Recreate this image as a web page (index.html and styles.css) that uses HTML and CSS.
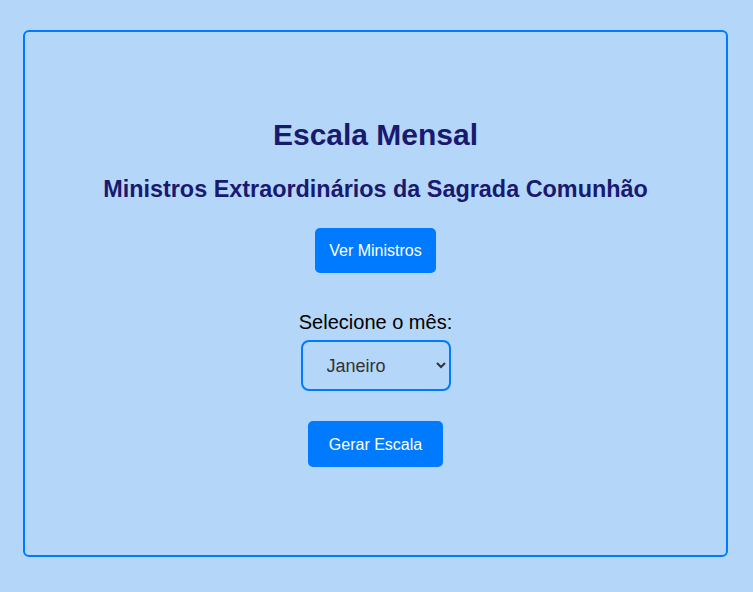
FILE: index.html
```html
<!DOCTYPE html>
<html lang="pt">
<head>
<meta charset="utf-8">
<title>Escala Mensal</title>
<link rel="stylesheet" href="styles.css">
</head>
<body>
<div class="card">
  <h1 class="title">Escala Mensal</h1>
  <h2 class="subtitle">Ministros Extraordinários da Sagrada Comunhão</h2>
  <button class="btn btn-ministros">Ver Ministros</button>
  <label class="label" for="mes">Selecione o mês:</label>
  <select class="select" id="mes">
    <option>Janeiro</option>
    <option>Fevereiro</option>
    <option>Março</option>
    <option>Abril</option>
    <option>Maio</option>
    <option>Junho</option>
    <option>Julho</option>
    <option>Agosto</option>
    <option>Setembro</option>
    <option>Outubro</option>
    <option>Novembro</option>
    <option>Dezembro</option>
  </select>
  <button class="btn btn-gerar">Gerar Escala</button>
</div>
</body>
</html>
```

FILE: styles.css
```css
html, body {
  margin: 0;
  padding: 0;
  background: #b4d6f9;
  font-family: "Liberation Sans", Arial, sans-serif;
}

body {
  padding: 30px 25px 35px 23px;
}

.card {
  border: 2px solid #007bff;
  border-radius: 6px;
  display: flex;
  flex-direction: column;
  align-items: center;
  padding-top: 85px;
  box-sizing: border-box;
  height: 527px;
}

.title {
  margin: 0;
  font-size: 30px;
  line-height: 36px;
  color: #191970;
  font-weight: bold;
}

.subtitle {
  margin: 22px 0 0;
  font-size: 23.4px;
  line-height: 28px;
  color: #191970;
  font-weight: bold;
}

.btn {
  background: #007bff;
  color: #ffffff;
  border: none;
  border-radius: 5px;
  font-family: "Liberation Sans", Arial, sans-serif;
  font-size: 16px;
  line-height: 19px;
  padding: 13px 14px;
}

.btn-ministros {
  margin-top: 25px;
}

.label {
  margin-top: 37px;
  font-size: 20px;
  line-height: 24px;
  color: #000;
}

.select {
  margin-top: 6px;
  width: 150px;
  height: 51px;
  border: 2px solid #007bff;
  border-radius: 8px;
  background: transparent;
  font-family: "Liberation Sans", Arial, sans-serif;
  font-size: 18px;
  color: #333;
  padding: 0 4px 0 20px;
}

.btn-gerar {
  margin-top: 30px;
  padding: 14px 20.5px 13px;
}
```
